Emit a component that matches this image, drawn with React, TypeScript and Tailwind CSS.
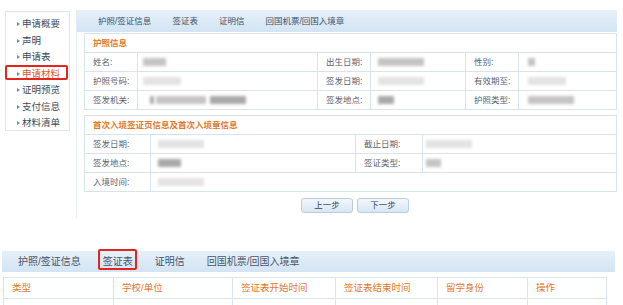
import React from "react";

const FONT = "font-['Liberation_Sans','Noto_Sans_CJK_SC',sans-serif]";

const menuItems = ["申请概要", "声明", "申请表", "申请材料", "证明预览", "支付信息", "材料清单"];
const tabs = ["护照/签证信息", "签证表", "证明信", "回国机票/回国入境章"];

type Tone = "dark" | "mid" | "faint";

// blurred-out personal data
function Blur({ w, tone = "mid", ml = 0 }: { w: number; tone?: Tone; ml?: number }) {
  const color =
    tone === "dark" ? "bg-[#a9a9a9]" : tone === "mid" ? "bg-[#c4c4c4]" : "bg-[#e3e3e3]";
  return (
    <span
      className={`inline-block h-[8px] align-middle blur-[1.5px] ${color}`}
      style={{ width: w, marginLeft: ml }}
    />
  );
}

function Sidebar() {
  return (
    <div className="ml-[5px] mt-[11px] h-[120px] w-[65px] border border-[#dde5ed] pt-[4px]">
      {menuItems.map((item) => {
        const active = item === "申请材料";
        return (
          <div key={item} className="relative flex h-[16.5px] items-center pl-[11px]">
            <span className="mr-[2px] h-0 w-0 border-y-[2.5px] border-l-[3px] border-y-transparent border-l-[#6d8db0]" />
            <span className={`text-[9.5px] ${active ? "text-[#e4572e]" : "text-[#3d4b5a]"}`}>{item}</span>
            {active && (
              <span className="absolute -left-[1px] right-[1px] top-[-1px] h-[15px] rounded-[2px] border-2 border-[#e0261f]" />
            )}
          </div>
        );
      })}
    </div>
  );
}

const lbl = "whitespace-nowrap border border-[#d7e3ee] pl-[8px] pr-0 text-left font-normal text-[#5a6470]";
const val = "whitespace-nowrap border border-[#d7e3ee] px-[5px]";

function PassportSection() {
  return (
    <table className="w-[533px] table-fixed border-collapse border border-[#d7e3ee] text-[8.5px]">
      <colgroup>
        <col className="w-[53px]" />
        <col className="w-[180px]" />
        <col className="w-[53px]" />
        <col className="w-[95px]" />
        <col className="w-[53px]" />
        <col />
      </colgroup>
      <tbody>
        <tr className="h-[19px]">
          <td colSpan={6} className="border border-[#d7e3ee] px-[8px] font-bold text-[#e07b28]">
            护照信息
          </td>
        </tr>
        <tr className="h-[19px]">
          <th className={lbl}>姓名:</th>
          <td className={val}><Blur w={23} tone="mid" /></td>
          <th className={lbl}>出生日期:</th>
          <td className={val}><Blur w={46} tone="mid" ml={2} /></td>
          <th className={lbl}>性别:</th>
          <td className={val}><Blur w={7} tone="mid" ml={4} /></td>
        </tr>
        <tr className="h-[19px]">
          <th className={lbl}>护照号码:</th>
          <td className={val}><Blur w={38} tone="faint" /></td>
          <th className={lbl}>签发日期:</th>
          <td className={val}><Blur w={46} tone="faint" ml={2} /></td>
          <th className={lbl}>有效期至:</th>
          <td className={val}><Blur w={38} tone="faint" ml={4} /></td>
        </tr>
        <tr className="h-[19px]">
          <th className={lbl}>签发机关:</th>
          <td className={val}>
            <Blur w={4} tone="dark" ml={7} />
            <Blur w={50} tone="mid" ml={2} />
            <Blur w={36} tone="dark" ml={4} />
          </td>
          <th className={lbl}>签发地点:</th>
          <td className={val}><Blur w={16} tone="dark" ml={2} /></td>
          <th className={lbl}>护照类型:</th>
          <td className={val}><Blur w={46} tone="mid" ml={4} /></td>
        </tr>
      </tbody>
    </table>
  );
}

function EntrySection() {
  return (
    <table className="mt-[5px] w-[533px] table-fixed border-collapse border border-[#d7e3ee] text-[8.5px]">
      <colgroup>
        <col className="w-[66px]" />
        <col className="w-[205px]" />
        <col className="w-[67px]" />
        <col />
      </colgroup>
      <tbody>
        <tr className="h-[19px]">
          <td colSpan={4} className="border border-[#d7e3ee] px-[8px] font-bold text-[#e07b28]">
            首次入境签证页信息及首次入境章信息
          </td>
        </tr>
        <tr className="h-[19px]">
          <th className={lbl}>签发日期:</th>
          <td className={val}><Blur w={46} tone="faint" ml={2} /></td>
          <th className={lbl}>截止日期:</th>
          <td className={val}><Blur w={46} tone="faint" ml={-2} /></td>
        </tr>
        <tr className="h-[19px]">
          <th className={lbl}>签发地点:</th>
          <td className={val}><Blur w={23} tone="dark" ml={2} /></td>
          <th className={lbl}>签证类型:</th>
          <td className={val}><Blur w={15} tone="mid" ml={-2} /></td>
        </tr>
        <tr className="h-[19px]">
          <th className={lbl}>入境时间:</th>
          <td colSpan={3} className={val}><Blur w={46} tone="faint" ml={2} /></td>
        </tr>
      </tbody>
    </table>
  );
}

function NavButton({ label }: { label: string }) {
  return (
    <button className="flex h-[15px] w-[52px] items-center justify-center rounded-[3px] border border-[#b9cee3] bg-gradient-to-b from-[#f3f8fd] to-[#d8e6f3] text-[8.5px] text-[#3a4654]">
      {label}
    </button>
  );
}

function MainPanel() {
  return (
    <div className="ml-[6px] mt-[10px] h-[208px] w-[541px] border-l border-[#e6edf3]">
      <div className="flex h-[22px] items-center gap-[21px] bg-gradient-to-b from-[#e6f0f9] to-[#d3e4f3] pl-[21px] text-[8.5px] text-[#3c4f66]">
        {tabs.map((t) => (
          <span key={t}>{t}</span>
        ))}
      </div>
      <div className="pl-[7px] pt-[1px]">
        <PassportSection />
        <EntrySection />
        <div className="mt-[6px] flex gap-[4px] pl-[217px]">
          <NavButton label="上一步" />
          <NavButton label="下一步" />
        </div>
      </div>
    </div>
  );
}

const headCols = [
  { t: "类型", w: "w-[110px]" },
  { t: "学校/单位", w: "w-[119px]" },
  { t: "签证表开始时间", w: "w-[103px]" },
  { t: "签证表结束时间", w: "w-[102px]" },
  { t: "留学身份", w: "w-[90px]" },
  { t: "操作", w: "" },
];

function BottomPart() {
  return (
    <div className="mt-[33px]">
      <div className="ml-[2px] flex h-[21px] w-[613px] items-center gap-[22px] bg-gradient-to-b from-[#e6f0f9] to-[#d3e4f3] pl-[16px] text-[10px] text-[#4a5566]">
        {tabs.map((t) => (
          <span key={t} className="relative">
            {t}
            {t === "签证表" && (
              <span className="absolute -left-[5px] -right-[4px] -top-[5px] h-[21px] rounded-[2px] border-2 border-[#e0261f]" />
            )}
          </span>
        ))}
      </div>
      <table className="ml-[3px] mt-[5px] w-[604px] table-fixed border-collapse border border-[#d7e3ee] text-[9.5px]">
        <colgroup>
          {headCols.map((c) => (
            <col key={c.t} className={c.w} />
          ))}
        </colgroup>
        <thead>
          <tr className="h-[21px]">
            {headCols.map((c) => (
              <th key={c.t} className="border border-[#d7e3ee] px-[8px] text-left font-normal text-[#e2782b]">
                {c.t}
              </th>
            ))}
          </tr>
        </thead>
        <tbody>
          <tr className="h-[21px]">
            {headCols.map((c) => (
              <td key={c.t} className="border border-[#d7e3ee]" />
            ))}
          </tr>
        </tbody>
      </table>
    </div>
  );
}

export default function App() {
  return (
    <div className={`h-[305px] w-[623px] overflow-hidden bg-white ${FONT}`}>
      <div className="flex items-start">
        <Sidebar />
        <MainPanel />
      </div>
      <BottomPart />
    </div>
  );
}
